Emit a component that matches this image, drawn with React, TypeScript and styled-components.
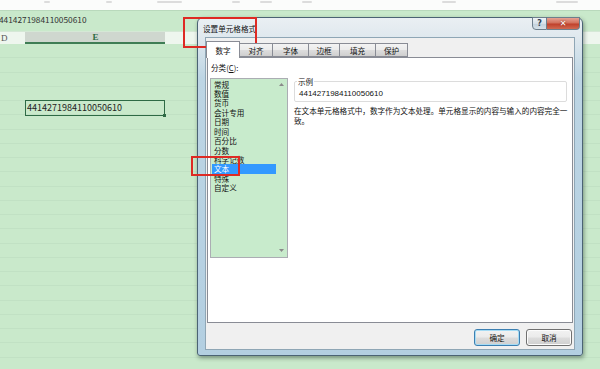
import React from "react";
import styled, { createGlobalStyle } from "styled-components";

const GlobalStyle = createGlobalStyle`
  html, body { margin: 0; padding: 0; }
  body { width: 600px; height: 369px; overflow: hidden; font-family: "Noto Sans CJK SC", "Noto Sans", sans-serif; }
  * { box-sizing: border-box; }
`;

const CJK = `"Noto Sans CJK SC", "Noto Sans", sans-serif`;

const Page = styled.div`
  position: relative;
  width: 600px;
  height: 369px;
  overflow: hidden;
  background: #c9e9cb;
  display: flex;
  flex-direction: column;
`;

const TopStrip = styled.div`
  height: 11px;
  background: #fbfcfb;
  border-bottom: 1px solid #b9d9bc;
  display: flex;
  align-items: flex-start;
  overflow: hidden;
`;

const Smudge = styled.span<{ $l: number; $w: number }>`
  display: block;
  margin-left: ${(p) => p.$l}px;
  width: ${(p) => p.$w}px;
  height: 2px;
  margin-top: 1px;
  background: #dcdcdc;
  border-radius: 1px;
`;

const FormulaBar = styled.div`
  height: 20px;
  display: flex;
  align-items: flex-start;
  padding-top: 2px;
  font-family: ${CJK};
  font-size: 8.3px;
  color: #333;
  margin-left: -1px;
`;

const HeaderRow = styled.div`
  height: 13px;
  display: flex;
  background: #eef6ee;
  border-top: 1px solid #d5e8d6;
`;

const HeadCell = styled.div<{ $w?: number; $active?: boolean }>`
  ${(p) => (p.$w ? `width: ${p.$w}px;` : "flex: 1;")}
  display: flex;
  align-items: center;
  justify-content: ${(p) => (p.$active ? "center" : "flex-start")};
  padding-left: 1px;
  font-family: "Liberation Serif", serif;
  font-size: 9px;
  color: ${(p) => (p.$active ? "#2d6b44" : "#555")};
  font-weight: ${(p) => (p.$active ? "bold" : "normal")};
  background: ${(p) => (p.$active ? "#cfd7cf" : "transparent")};
  border-bottom: ${(p) => (p.$active ? "2px solid #3f7d55" : "none")};
`;

const Sheet = styled.div`
  display: flex;
  flex-direction: column;
  flex: 1;
`;

const Row = styled.div`
  height: 14.25px;
  display: flex;
  border-bottom: 1px solid #c1e1c4;
`;

const Cell = styled.div<{ $w?: number; $active?: boolean }>`
  ${(p) => (p.$w ? `width: ${p.$w}px;` : "flex: 1;")}
  position: relative;
  font-family: ${CJK};
  font-size: 9px;
  line-height: 13px;
  color: #222;
  padding-left: 1px;
  ${(p) => (p.$active ? "border: 1px solid #2e6a45; height: 16px; margin-top: -1px;" : "")}
`;

const FillHandle = styled.span`
  position: absolute;
  right: -2px;
  bottom: -2px;
  width: 3px;
  height: 3px;
  background: #2e6a45;
`;

/* ---------- Dialog ---------- */

const Dialog = styled.div`
  position: absolute;
  left: 197px;
  top: 17px;
  width: 386px;
  height: 339px;
  border: 1px solid #4b6374;
  border-radius: 6px 6px 3px 3px;
  background: linear-gradient(180deg, #eaeff3 0px, #dfe8ee 20px, #bdd5e4 60px, #b3cfe1 100%);
  box-shadow: 1px 2px 4px rgba(20, 40, 30, 0.45);
  display: flex;
  flex-direction: column;
  padding: 0 7px 5px 7px;
`;

const TitleBar = styled.div`
  height: 20px;
  display: flex;
  align-items: flex-start;
  justify-content: space-between;
`;

const Title = styled.div`
  font-family: ${CJK};
  font-size: 7.6px;
  color: #111;
  padding-top: 5px;
  margin-left: -2px;
`;

const Controls = styled.div`
  display: flex;
  margin-top: -1px;
  margin-right: -5px;
`;

const CtrlBtn = styled.div<{ $close?: boolean }>`
  width: ${(p) => (p.$close ? 33 : 15)}px;
  height: 13px;
  display: flex;
  align-items: center;
  justify-content: center;
  font-family: "DejaVu Sans", sans-serif;
  font-weight: bold;
  font-size: 8px;
  color: ${(p) => (p.$close ? "#fff" : "#2d4152")};
  border: 1px solid #6d7f8c;
  border-left-width: ${(p) => (p.$close ? 0 : 1)}px;
  border-radius: ${(p) => (p.$close ? "0 0 4px 0" : "0 0 0 4px")};
  background: ${(p) =>
    p.$close
      ? "linear-gradient(180deg, #e6a293 0%, #d2705c 45%, #c0412c 55%, #d06a52 100%)"
      : "linear-gradient(180deg, #eef3f7 0%, #d5e0e8 50%, #c3d2dd 55%, #d5e1e9 100%)"};
  text-shadow: ${(p) => (p.$close ? "0 0 2px #7a1a0a" : "none")};
`;

const Client = styled.div`
  flex: 1;
  background: #f0f0f0;
  border: 1px solid #8fa6b5;
  display: flex;
  flex-direction: column;
  padding: 4px 1px 3px 0;
`;

const Tabs = styled.div`
  display: flex;
  align-items: flex-end;
  height: 15px;
  position: relative;
  z-index: 1;
`;

const Tab = styled.div<{ $w: number; $active?: boolean }>`
  width: ${(p) => p.$w}px;
  height: ${(p) => (p.$active ? 17 : 14)}px;
  margin-bottom: ${(p) => (p.$active ? -1 : 0)}px;
  border: 1px solid #898c95;
  border-bottom: ${(p) => (p.$active ? "none" : "1px solid #898c95")};
  border-left-width: ${(p) => (p.$active ? 1 : 0)}px;
  background: ${(p) => (p.$active ? "#ffffff" : "linear-gradient(180deg, #f3f3f3 0%, #ebebeb 50%, #dddddd 51%, #cfcfcf 100%)")};
  display: flex;
  align-items: center;
  justify-content: center;
  font-family: ${CJK};
  font-size: 7.6px;
  color: #111;
  padding-top: ${(p) => (p.$active ? 0 : 1)}px;
`;

const Panel = styled.div`
  height: 266px;
  margin-left: 1px;
  background: #fff;
  border: 1px solid #898c95;
  display: flex;
  gap: 6px;
  padding: 5px 5px 0 2px;
`;

const LeftCol = styled.div`
  width: 78px;
  flex-shrink: 0;
  display: flex;
  flex-direction: column;
`;

const Label = styled.div`
  font-family: ${CJK};
  font-size: 7.6px;
  line-height: 10px;
  height: 15px;
  color: #111;
  padding-left: 1px;
  u { text-decoration: underline; }
`;

const ListBox = styled.div`
  height: 180px;
  background: #c8ebcc;
  border: 1px solid #abadb3;
  display: flex;
`;

const Items = styled.div`
  flex: 1;
  display: flex;
  flex-direction: column;
  padding-top: 0.5px;
`;

const Item = styled.div<{ $sel?: boolean }>`
  height: 9.45px;
  line-height: 9.45px;
  font-family: ${CJK};
  font-size: 7.6px;
  color: ${(p) => (p.$sel ? "#fff" : "#111")};
  background: ${(p) => (p.$sel ? "#3399ff" : "transparent")};
  padding-left: 2px;
  margin-left: 1px;
  white-space: nowrap;
  overflow: hidden;
`;

const ScrollBar = styled.div`
  width: 11px;
  flex-shrink: 0;
  display: flex;
  flex-direction: column;
  justify-content: space-between;
  align-items: center;
  padding: 4px 0 5px;
`;

const Arrow = styled.svg`
  width: 5px;
  height: 3px;
  display: block;
`;

const RightCol = styled.div`
  flex: 1;
  min-width: 0;
  display: flex;
  flex-direction: column;
`;

const Sample = styled.fieldset`
  margin: 14px 0 0 0;
  padding: 0 0 3px 3px;
  border: 1px solid #dcdcdc;
  border-radius: 2px;
  height: 25px;
  min-width: 0;
`;

const Legend = styled.legend`
  font-family: ${CJK};
  font-size: 7.6px;
  line-height: 9px;
  color: #111;
  padding: 0 1px;
  margin-left: -1px;
`;

const SampleValue = styled.div`
  font-family: "Liberation Sans", Arial, sans-serif;
  font-size: 8px;
  line-height: 10px;
  color: #111;
  padding-left: 1px;
  margin-top: 3px;
`;

const Desc = styled.div`
  font-family: ${CJK};
  font-size: 7.6px;
  line-height: 9.5px;
  color: #111;
  margin-top: 4px;
  margin-right: -3px;
`;

const Footer = styled.div`
  display: flex;
  justify-content: flex-end;
  gap: 6px;
  padding-top: 6px;
  padding-right: 1px;
`;

const Button = styled.div<{ $def?: boolean }>`
  width: 46px;
  height: 17px;
  border: 1px solid ${(p) => (p.$def ? "#3c7fb1" : "#707070")};
  border-radius: 3px;
  background: linear-gradient(180deg, #f2f2f2 0%, #ebebeb 48%, #dddddd 52%, #cfcfcf 100%);
  box-shadow: ${(p) => (p.$def ? "inset 0 0 0 1px #a6dcf5" : "inset 0 0 0 1px #fcfcfc")};
  display: flex;
  align-items: center;
  justify-content: center;
  font-family: ${CJK};
  font-size: 7.6px;
  color: #111;
`;

const RedBox = styled.div<{ $l: number; $t: number; $w: number; $h: number }>`
  position: absolute;
  left: ${(p) => p.$l}px;
  top: ${(p) => p.$t}px;
  width: ${(p) => p.$w}px;
  height: ${(p) => p.$h}px;
  border: 2px solid #de2a24;
  pointer-events: none;
`;

const categories = ["常规", "数值", "货币", "会计专用", "日期", "时间", "百分比", "分数", "科学记数", "文本", "特殊", "自定义"];
const tabs: [string, number][] = [
  ["数字", 34],
  ["对齐", 33],
  ["字体", 36],
  ["边框", 31],
  ["填充", 36],
  ["保护", 32],
];
const smudges: [number, number][] = [
  [44, 6],
  [56, 6],
  [45, 25],
  [50, 8],
  [20, 12],
  [30, 10],
  [130, 14],
  [100, 22],
];

const NUMBER = "4414271984110050610";

export default function App() {
  const rows = Array.from({ length: 22 }, (_, i) => i);
  return (
    <>
      <GlobalStyle />
      <Page>
        <TopStrip>
          {smudges.map(([l, w], i) => (
            <Smudge key={i} $l={l} $w={w} />
          ))}
        </TopStrip>
        <FormulaBar>{NUMBER}</FormulaBar>
        <HeaderRow>
          <HeadCell $w={25}>D</HeadCell>
          <HeadCell $w={140} $active>
            E
          </HeadCell>
          <HeadCell />
        </HeaderRow>
        <Sheet>
          {rows.map((r) => (
            <Row key={r}>
              <Cell $w={25} />
              <Cell $w={140} $active={r === 4}>
                {r === 4 && (
                  <>
                    {NUMBER}
                    <FillHandle />
                  </>
                )}
              </Cell>
              <Cell />
            </Row>
          ))}
        </Sheet>

        <Dialog>
          <TitleBar>
            <Title>设置单元格格式</Title>
            <Controls>
              <CtrlBtn>?</CtrlBtn>
              <CtrlBtn $close>✕</CtrlBtn>
            </Controls>
          </TitleBar>
          <Client>
            <Tabs>
              {tabs.map(([t, w], i) => (
                <Tab key={t} $w={w} $active={i === 0}>
                  {t}
                </Tab>
              ))}
            </Tabs>
            <Panel>
              <LeftCol>
                <Label>
                  分类(<u>C</u>):
                </Label>
                <ListBox>
                  <Items>
                    {categories.map((c) => (
                      <Item key={c} $sel={c === "文本"}>
                        {c}
                      </Item>
                    ))}
                  </Items>
                  <ScrollBar>
                    <Arrow viewBox="0 0 5 3">
                      <path d="M0 3 L2.5 0 L5 3 Z" fill="#8a8a8a" />
                    </Arrow>
                    <Arrow viewBox="0 0 5 3">
                      <path d="M0 0 L2.5 3 L5 0 Z" fill="#8a8a8a" />
                    </Arrow>
                  </ScrollBar>
                </ListBox>
              </LeftCol>
              <RightCol>
                <Sample>
                  <Legend>示例</Legend>
                  <SampleValue>{NUMBER}</SampleValue>
                </Sample>
                <Desc>在文本单元格格式中，数字作为文本处理。单元格显示的内容与输入的内容完全一致。</Desc>
              </RightCol>
            </Panel>
            <Footer>
              <Button $def>确定</Button>
              <Button>取消</Button>
            </Footer>
          </Client>
        </Dialog>

        <RedBox $l={183} $t={17} $w={74} $h={31} />
        <RedBox $l={191} $t={156} $w={49} $h={20} />
      </Page>
    </>
  );
}
